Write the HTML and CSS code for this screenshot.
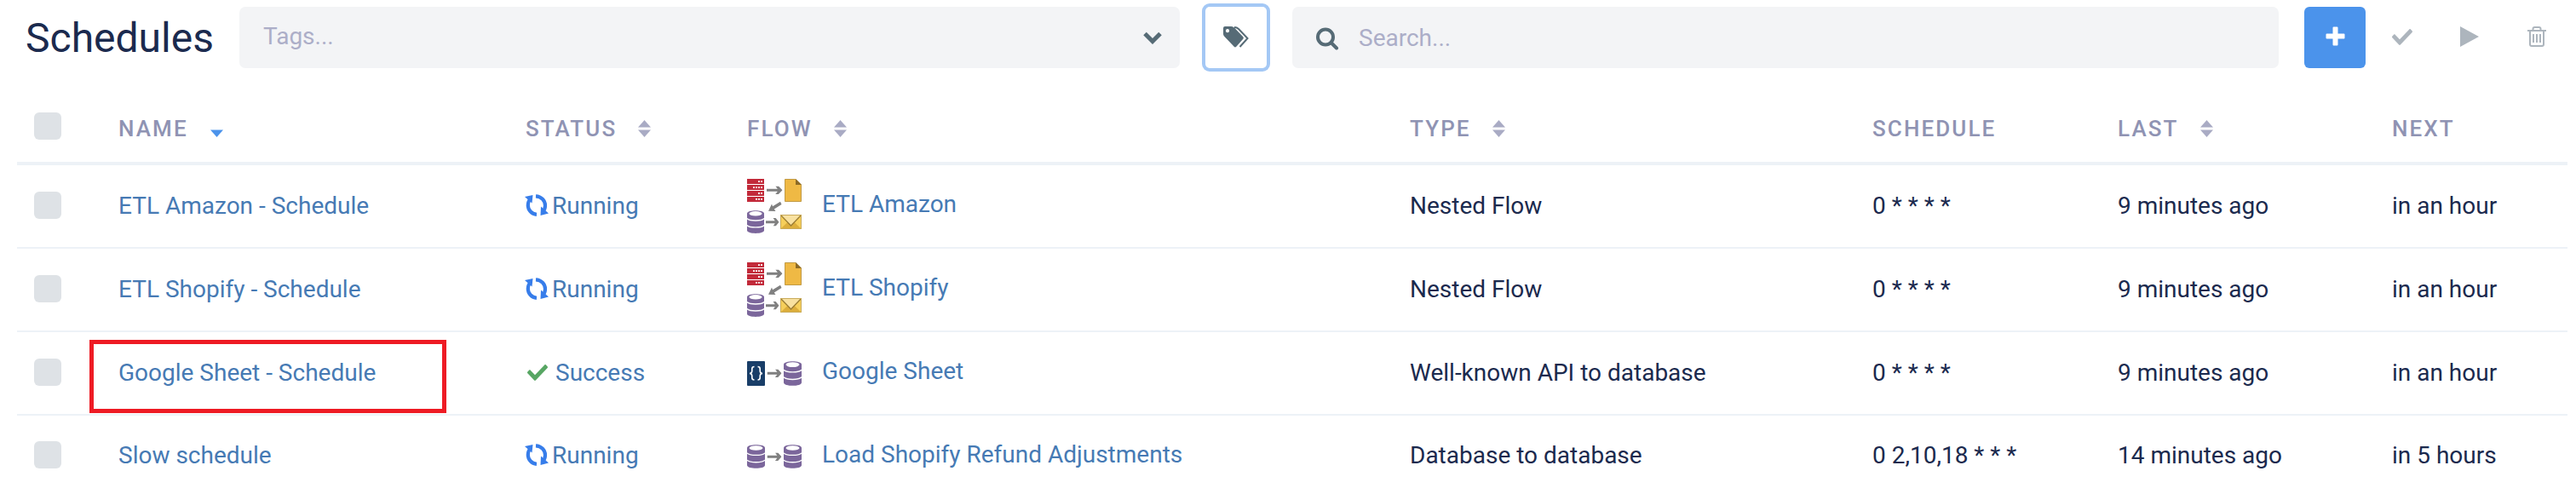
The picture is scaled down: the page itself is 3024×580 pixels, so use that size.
FILE: index.html
```html
<!DOCTYPE html>
<html lang="en">
<head>
  <meta charset="utf-8">
  <title>Schedules</title>
  <link rel="stylesheet" href="styles.css">
</head>
<body>

<!-- shared icons -->
<svg class="sprite">
  <symbol id="sort" viewBox="0 0 15 20">
    <path d="M7.5 0L15 8.500H0z"/>
    <path d="M0 11.500h15L7.500 20z"/>
  </symbol>
  <symbol id="sort-down" viewBox="0 0 15 20">
    <path d="M0 11.500h15L7.500 20z"/>
  </symbol>
  <symbol id="check" viewBox="0 65 512 382" preserveAspectRatio="none">
    <path d="M173.898 439.404l-166.400-166.400c-9.997-9.997-9.997-26.206 0-36.204l36.203-36.204c9.997-9.998 26.207-9.998 36.204 0L192 312.690 432.095 72.596c9.997-9.997 26.207-9.997 36.204 0l36.203 36.204c9.997 9.997 9.997 26.206 0 36.204l-294.400 294.401c-9.998 9.997-26.207 9.997-36.204-.001z"/>
  </symbol>
  <symbol id="running" viewBox="0 0 28 26">
    <path d="M14 23.800C8 23.300 3.800 18.500 3.800 13C3.800 10 4.800 7.500 6.800 5.500" fill="none" stroke="currentColor" stroke-width="4.200"/>
    <path d="M13 2.300C19.500 2.600 24 7.500 24 13.200C24 16.200 23 18.800 21 20.800" fill="none" stroke="currentColor" stroke-width="4.200"/>
    <path d="M0 3L9.500 1L8.500 10.500z"/>
    <path d="M28 22.500L18.500 25L19 14.500z"/>
  </symbol>
  <symbol id="db" viewBox="0 0 20 27" preserveAspectRatio="none">
    <path d="M0 3.500C0-1 20-1 20 3.500V23.500C20 28 0 28 0 23.500z" fill="#7b669b"/>
    <ellipse cx="10" cy="3.800" rx="7.600" ry="2.700" fill="#fff"/>
    <path d="M0 9.500C3 12.800 17 12.800 20 9.500M0 17.500C3 20.800 17 20.800 20 17.500" fill="none" stroke="#fff" stroke-width="1.300"/>
  </symbol>
  <symbol id="arrow" viewBox="0 0 18 10" preserveAspectRatio="none">
    <path d="M0 3.500h12.500L10 0h3.500L18 5l-4.500 5H10l2.500-3.500H0z" fill="#808080"/>
  </symbol>
  <symbol id="nested" viewBox="0 0 64 64">
    <path d="M0 0h20v27H0z" fill="#c22a3a"/>
    <path d="M0 6.500h20M0 13.500h20M0 20.500h20" stroke="#fff" stroke-width="1"/>
    <path d="M13 3.200h5M7 10.200h11M13 17h5M10 23.800h8" stroke="#fff" stroke-width="1.800" stroke-dasharray="2 1"/>
    <path d="M44.500.500h12.500l6.500 6.500v19.500h-19z" fill="#efb944" stroke="#c19a45"/>
    <path d="M57 0l7 7h-7z" fill="#8c6a25"/>
    <use href="#arrow" x="23" y="8.500" width="18.500" height="9.500"/>
    <path d="M39 26.800l-9 5.400-1-2.700-4 8.300 8.500.200-1.700-2.500 8.700-5.500z" fill="#808080"/>
    <use href="#db" x="0" y="37" width="20" height="27"/>
    <use href="#arrow" x="22" y="46" width="15.500" height="9.500"/>
    <path d="M39 42h25v17H39z" fill="#f6cf5b"/>
    <path d="M39.500 58.500l9-8.500h6l9 8.500z" fill="#dcae3c"/>
    <path d="M39.500 42.500h24L51.500 54.500z" fill="#f8e1a0"/>
    <path d="M39.500 42.500L51.500 55l12-12.500" fill="none" stroke="#9a7d35" stroke-width="1.300"/>
    <path d="M39.500 42.500h24v16h-24z" fill="none" stroke="#c9ab5b"/>
  </symbol>
</svg>

<header class="toolbar">
  <h1>Schedules</h1>
  <div class="field tags">
    <span>Tags...</span>
    <svg width="22" height="15" viewBox="0 0 22 15"><path d="M2 2.500l9 9 9-9" fill="none" stroke="currentColor" stroke-width="5"/></svg>
  </div>
  <button class="tag-btn">
    <svg width="30" height="25" viewBox="0 0 30 25">
      <path fill-rule="evenodd" d="M0 2Q0 0 2 0H9.500Q11.500 0 13 1.500L23.300 12.300Q24.500 13.500 23.300 14.700L15.300 23.800Q14 25 12.700 23.800L1.500 12Q0 10.500 0 9zM5 3a2.100 2.100 0 1 0 .01 0z"/>
      <path d="M13 1C15.500 1 16.500 1.500 18 3L28.500 14 19.500 24" fill="none" stroke="currentColor" stroke-width="2"/>
    </svg>
  </button>
  <div class="field search">
    <svg width="27" height="27" viewBox="0 0 27 27"><circle cx="11" cy="11.500" r="9" fill="none" stroke="currentColor" stroke-width="4"/><path d="M17.500 18l6.500 6.500" stroke="currentColor" stroke-width="4" stroke-linecap="round"/></svg>
    <span>Search...</span>
  </div>
  <div class="actions">
    <button class="add"><svg width="23" height="23" viewBox="0 0 23 23"><path d="M8.500 1.500Q8.500.500 9.500.500h4Q14.500.500 14.500 1.500V8.500H21.500Q22.500 8.500 22.500 9.500v4Q22.500 14.500 21.500 14.500H14.500V21.500Q14.500 22.500 13.500 22.500h-4Q8.500 22.500 8.500 21.500V14.500H1.500Q.500 14.500.500 13.500v-4Q.500 8.500 1.500 8.500H8.500z"/></svg></button>
    <button><svg width="24" height="19"><use href="#check"/></svg></button>
    <button><svg width="22" height="24" viewBox="0 0 22 24"><path d="M0 0l22 12L0 24z"/></svg></button>
    <button><svg width="22" height="24" viewBox="0 0 22 24"><path d="M0 5h22M6.500 5V3Q6.500 1 8.500 1h5Q15.500 1 15.500 3V5M3 5v16Q3 23 5 23h12Q19 23 19 21V5M7 9v10M11 9v10M15 9v10" fill="none" stroke="currentColor" stroke-width="2"/></svg></button>
  </div>
</header>

<table class="schedules">
  <colgroup>
    <col class="c-check"><col class="c-name"><col class="c-status"><col class="c-flow">
    <col class="c-type"><col class="c-schedule"><col class="c-last"><col class="c-next">
  </colgroup>
  <thead>
    <tr>
      <th class="check"><span class="checkbox"></span></th>
      <th>Name<svg class="sort active"><use href="#sort-down"/></svg></th>
      <th>Status<svg class="sort"><use href="#sort"/></svg></th>
      <th>Flow<svg class="sort"><use href="#sort"/></svg></th>
      <th>Type<svg class="sort"><use href="#sort"/></svg></th>
      <th>Schedule</th>
      <th>Last<svg class="sort"><use href="#sort"/></svg></th>
      <th>Next</th>
    </tr>
  </thead>
  <tbody>
    <tr>
      <td><span class="checkbox"></span></td>
      <td><a>ETL Amazon - Schedule</a></td>
      <td><a class="status"><svg class="run"><use href="#running"/></svg>Running</a></td>
      <td class="flow-cell"><a class="flow"><svg width="64" height="64"><use href="#nested"/></svg><span>ETL Amazon</span></a></td>
      <td>Nested Flow</td>
      <td>0 * * * *</td>
      <td>9 minutes ago</td>
      <td>in an hour</td>
    </tr>
    <tr>
      <td><span class="checkbox"></span></td>
      <td><a>ETL Shopify - Schedule</a></td>
      <td><a class="status"><svg class="run"><use href="#running"/></svg>Running</a></td>
      <td class="flow-cell"><a class="flow"><svg width="64" height="64"><use href="#nested"/></svg><span>ETL Shopify</span></a></td>
      <td>Nested Flow</td>
      <td>0 * * * *</td>
      <td>9 minutes ago</td>
      <td>in an hour</td>
    </tr>
    <tr>
      <td><span class="checkbox"></span></td>
      <td class="marked"><a>Google Sheet - Schedule</a></td>
      <td><a class="status"><svg class="ok"><use href="#check"/></svg>Success</a></td>
      <td class="flow-cell">
        <a class="flow">
          <svg width="64" height="29" viewBox="0 0 64 29">
            <rect width="21" height="29" rx="1" fill="#193e68"/>
            <path d="M8.500 6.500Q5.800 6.500 5.800 9v2.500Q5.800 14.300 3 14.500 5.800 14.700 5.800 17.500V19.500Q5.800 22 8.500 22M12.500 6.500Q15.200 6.500 15.200 9v2.500Q15.200 14.300 18 14.500 15.200 14.700 15.200 17.500V19.500Q15.200 22 12.500 22" fill="none" stroke="#fff" stroke-width="1.600"/>
            <use href="#arrow" x="23.500" y="9.500" width="17" height="9.500"/>
            <use href="#db" x="43" y="0" width="21" height="29"/>
          </svg><span>Google Sheet</span>
        </a>
      </td>
      <td>Well-known API to database</td>
      <td>0 * * * *</td>
      <td>9 minutes ago</td>
      <td>in an hour</td>
    </tr>
    <tr>
      <td><span class="checkbox"></span></td>
      <td><a>Slow schedule</a></td>
      <td><a class="status"><svg class="run"><use href="#running"/></svg>Running</a></td>
      <td class="flow-cell">
        <a class="flow">
          <svg width="64" height="28" viewBox="0 0 64 28">
            <use href="#db" x="0" y="0" width="21" height="28"/>
            <use href="#arrow" x="23.500" y="9.500" width="17" height="9.500"/>
            <use href="#db" x="43" y="0" width="21" height="28"/>
          </svg><span>Load Shopify Refund Adjustments</span>
        </a>
      </td>
      <td>Database to database</td>
      <td>0 2,10,18 * * *</td>
      <td>14 minutes ago</td>
      <td>in 5 hours</td>
    </tr>
  </tbody>
</table>

</body>
</html>
```
FILE: styles.css
```css
body {
  margin: 0;
  background: #fff;
  color: #1b2a4e;
  font-family: Roboto, sans-serif;
  font-size: 28px;
}
svg {
  fill: currentColor;
}
.sprite {
  display: none;
}

/* toolbar */
.toolbar {
  display: flex;
  align-items: center;
  gap: 30px;
  height: 72px;
  padding: 8px 0 0 30px;
}
h1 {
  margin: 0;
  width: 221px;
  font-size: 48px;
  font-weight: 400;
}
.field {
  display: flex;
  align-items: center;
  box-sizing: border-box;
  height: 72px;
  background: #f3f4f6;
  border-radius: 7px;
  color: #566b76;
}
.field span {
  color: #acaec8;
}
.tags {
  width: 1104px;
  justify-content: space-between;
  padding: 0 21px 0 28px;
}
.tags span {
  padding-bottom: 3px;
}
.search {
  width: 1158px;
  padding: 0 28px;
  gap: 23px;
}
.search svg {
  margin-top: 2px;
}
button {
  display: flex;
  align-items: center;
  justify-content: center;
  width: 79px;
  height: 72px;
  padding: 0 0 2px;
  border: 0;
  background: none;
  color: #adb5bd;
}
.tag-btn {
  width: 72px;
  border-radius: 5px;
  box-shadow: 0 0 0 4px #a4c8f5;
  color: #566b76;
}
.actions {
  display: flex;
}
.add {
  width: 72px;
  padding-bottom: 4px;
  margin-right: 3px;
  background: #4b93eb;
  border-radius: 6px;
  color: #fff;
}

/* table */
.schedules {
  width: 2994px;
  margin: 26px 0 0 20px;
  table-layout: fixed;
  border-collapse: separate;
  border-spacing: 0;
}
.c-check { width: 119px; }
.c-name { width: 478px; }
.c-status { width: 260px; }
.c-flow { width: 778px; }
.c-type { width: 543px; }
.c-schedule { width: 288px; }
.c-last { width: 322px; }
.c-next { width: 206px; }

th {
  box-sizing: border-box;
  height: 88px;
  padding: 6px 0 0;
  border-bottom: 4px solid #edf2f7;
  color: #8f93b3;
  font-size: 26px;
  font-weight: 500;
  letter-spacing: 2.1px;
  text-align: left;
  text-transform: uppercase;
}
th.check {
  padding-top: 0;
}
td {
  box-sizing: border-box;
  height: 98px;
  padding: 0 0 2px;
  border-bottom: 2px solid #edf2f7;
  white-space: nowrap;
}
td.flow-cell {
  padding-bottom: 0;
}
tr:last-child td {
  height: 92px;
  padding-top: 2px;
  border-bottom: 0;
}
tr:last-child td.flow-cell {
  padding-top: 4px;
}
.checkbox {
  display: block;
  width: 32px;
  height: 32px;
  margin-left: 20px;
  background: #dee2e6;
  border-radius: 6px;
}
.sort {
  width: 15px;
  height: 20px;
  margin-left: 25px;
  vertical-align: -1px;
  color: #a9abc4;
}
.sort.active {
  margin-left: 26px;
  color: #4b93eb;
}
a {
  color: #467ab4;
}
.status, .flow {
  display: flex;
  align-items: center;
}
.run {
  width: 28px;
  height: 26px;
  margin: 0 4px 0 -1px;
  color: #377dea;
}
.ok {
  width: 24px;
  height: 19px;
  margin: 0 9px 0 2px;
  color: #57a663;
}
.flow svg {
  margin: 0 24px 0 0;
}
.flow span {
  padding-bottom: 5px;
}

/* highlighted schedule */
.marked {
  position: relative;
}
.marked::after {
  content: "";
  position: absolute;
  box-sizing: border-box;
  left: -34px;
  top: 9px;
  width: 419px;
  height: 86px;
  border: 5px solid #ee1b24;
}
```
